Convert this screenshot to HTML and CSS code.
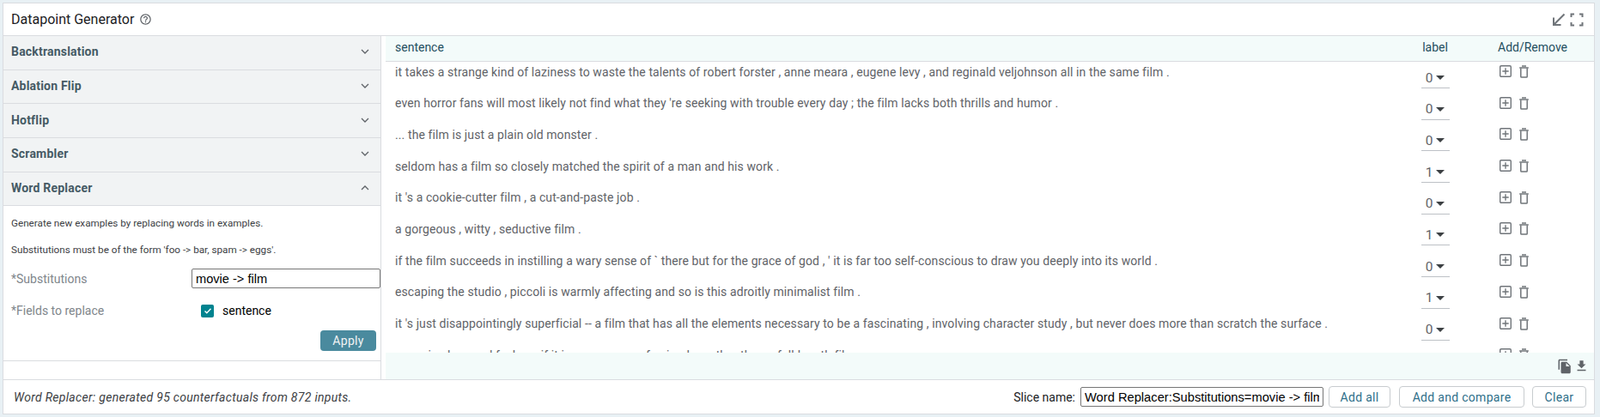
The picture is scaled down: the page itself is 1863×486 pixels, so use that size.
FILE: index.html
```html
<!DOCTYPE html>
<html lang="en">
<head>
    <meta charset="UTF-8">
    <title>Datapoint Generator</title>
    <link rel="stylesheet" href="styles.css">
</head>
<body>
    <div class="panel">
        <div class="panel-header">
            <div class="panel-title">
                <span>Datapoint Generator</span>
                <svg class="help-icon" width="15" height="15" viewBox="0 0 24 24"><path fill="#5f6368" d="M11 18h2v-2h-2v2zm1-16C6.48 2 2 6.48 2 12s4.480 10 10 10 10-4.480 10-10S17.520 2 12 2zm0 18c-4.410 0-8-3.590-8-8s3.590-8 8-8 8 3.590 8 8-3.590 8-8 8zm0-14c-2.210 0-4 1.790-4 4h2c0-1.100.9-2 2-2s2 .9 2 2c0 2-3 1.750-3 5h2c0-2.250 3-2.500 3-5 0-2.210-1.790-4-4-4z"/></svg>
            </div>
            <div class="panel-actions">
                <svg width="18" height="18" viewBox="0 0 18 18"><path fill="none" stroke="#70757a" stroke-width="2" d="M15.500 2.500 3 15M3 6.500V15h8.500"/></svg>
                <svg width="18" height="18" viewBox="0 0 18 18"><path fill="none" stroke="#70757a" stroke-width="2" d="M2.500 6V2.500H6M12 2.500h3.500V6M15.500 12v3.500H12M6 15.500H2.500V12"/></svg>
            </div>
        </div>

        <div class="panel-body">
            <div class="sidebar">
                <div class="acc-head"><span>Backtranslation</span><svg class="chev" width="10" height="6" viewBox="0 0 10 6"><path d="M1 1l4 4 4-4"/></svg></div>
                <div class="acc-head"><span>Ablation Flip</span><svg class="chev" width="10" height="6" viewBox="0 0 10 6"><path d="M1 1l4 4 4-4"/></svg></div>
                <div class="acc-head"><span>Hotflip</span><svg class="chev" width="10" height="6" viewBox="0 0 10 6"><path d="M1 1l4 4 4-4"/></svg></div>
                <div class="acc-head"><span>Scrambler</span><svg class="chev" width="10" height="6" viewBox="0 0 10 6"><path d="M1 1l4 4 4-4"/></svg></div>
                <div class="acc-head"><span>Word Replacer</span><svg class="chev" width="10" height="6" viewBox="0 0 10 6"><path d="M1 5l4-4 4 4"/></svg></div>
                <div class="acc-content">
                    <p class="desc">Generate new examples by replacing words in examples.</p>
                    <p class="desc">Substitutions must be of the form 'foo -&gt; bar, spam -&gt; eggs'.</p>
                    <div class="field field-subs">
                        <label class="field-label">*Substitutions</label>
                        <input class="subs-input" type="text" value="movie -&gt; film">
                    </div>
                    <div class="field field-check">
                        <label class="field-label">*Fields to replace</label>
                        <div class="check-wrap">
                            <span class="check-box"><svg width="12" height="12" viewBox="0 0 12 12"><path fill="none" stroke="#fff" stroke-width="1.400" d="M2.500 6.500l2.300 2.300 4.700-5"/></svg></span>
                            <span>sentence</span>
                        </div>
                    </div>
                    <div class="apply-row"><button class="apply-btn">Apply</button></div>
                </div>
            </div>

            <div class="table-wrap">
                <div class="row row-head">
                    <div class="cell-text">sentence</div>
                    <div class="cell-label">label</div>
                    <div class="cell-actions">Add/Remove</div>
                </div>
                <div class="rows" id="rows"></div>
                <div class="table-foot">
                    <svg width="18" height="18" viewBox="0 0 24 24"><path fill="#5f6368" d="M16 1H4c-1.100 0-2 .9-2 2v14h2V3h12V1zm-1 4 6 6v10c0 1.100-.9 2-2 2H7.990C6.890 23 6 22.100 6 21l.01-14c0-1.100.89-2 1.990-2h7zm-1 7h5.500L14 6.500V12z"/></svg>
                    <svg width="17" height="17" viewBox="0 0 24 24"><path fill="#5f6368" d="M19 9h-4V3H9v6H5l7 7 7-7zM5 18v2h14v-2H5z"/></svg>
                </div>
            </div>
        </div>

        <div class="panel-footer">
            <div class="status">Word Replacer: generated 95 counterfactuals from 872 inputs.</div>
            <div class="footer-controls">
                <label class="slice-label">Slice name:</label>
                <input class="slice-input" type="text" value="Word Replacer:Substitutions=movie -&gt; film">
                <button class="hairline-btn btn-all">Add all</button>
                <button class="hairline-btn btn-compare">Add and compare</button>
                <button class="hairline-btn btn-clear">Clear</button>
            </div>
        </div>
    </div>

    <script>
        const rows = [
            ["it takes a strange kind of laziness to waste the talents of robert forster , anne meara , eugene levy , and reginald veljohnson all in the same film .", 0],
            ["even horror fans will most likely not find what they 're seeking with trouble every day ; the film lacks both thrills and humor .", 0],
            ["... the film is just a plain old monster .", 0],
            ["seldom has a film so closely matched the spirit of a man and his work .", 1],
            ["it 's a cookie-cutter film , a cut-and-paste job .", 0],
            ["a gorgeous , witty , seductive film .", 1],
            ["if the film succeeds in instilling a wary sense of ` there but for the grace of god , ' it is far too self-conscious to draw you deeply into its world .", 0],
            ["escaping the studio , piccoli is warmly affecting and so is this adroitly minimalist film .", 1],
            ["it 's just disappointingly superficial -- a film that has all the elements necessary to be a fascinating , involving character study , but never does more than scratch the surface .", 0],
            ["a movie plays and feels as if it is a sequence of episodes rather than a full-length film .", 0]
        ];

        const plusIcon = '<svg width="14" height="14" viewBox="0 0 14 14"><rect x=".7" y=".7" width="12.600" height="12.600" rx="1.200" fill="none" stroke="#70757a" stroke-width="1.400"/><path stroke="#70757a" stroke-width="1.400" d="M7 3.300v7.400M3.300 7h7.400"/></svg>';
        const trashIcon = '<svg width="11" height="15" viewBox="0 0 11 15"><path fill="none" stroke="#70757a" stroke-width="1.500" d="M1.800 3.500v9.700c0 .5.300.8.800.8h5.800c.5 0 .8-.3.8-.8V3.500"/><path stroke="#70757a" stroke-width="1.500" d="M.2 3h10.600M3 1h5"/></svg>';

        const container = document.getElementById('rows');
        rows.forEach(function (r) {
            const row = document.createElement('div');
            row.className = 'row';
            row.innerHTML = '<div class="cell-text"></div>' +
                '<div class="cell-label"><span class="select"><span>' + r[1] + '</span><i class="caret"></i></span></div>' +
                '<div class="cell-actions">' + plusIcon + trashIcon + '</div>';
            row.querySelector('.cell-text').textContent = r[0];
            container.appendChild(row);
        });
    </script>
</body>
</html>
```

FILE: styles.css
```css
* {
    box-sizing: border-box;
}

html, body {
    height: 100%;
}

body {
    margin: 0;
    padding: 3px 6px 3px 3px;
    background-color: #e8f0f4;
    font-family: Roboto, "Noto Sans", sans-serif;
    overflow: hidden;
}

.panel {
    display: flex;
    flex-direction: column;
    height: 480px;
    background-color: #fff;
    border: 1px solid #dadce0;
}

.panel-header {
    display: flex;
    align-items: center;
    justify-content: space-between;
    height: 38px;
    flex: none;
    padding: 0 11px 0 9px;
    border-bottom: 1px solid #dadce0;
}

.panel-title {
    display: flex;
    align-items: center;
    gap: 6px;
    font-size: 16px;
    color: #202124;
}

.panel-actions {
    display: flex;
    gap: 3px;
}

.panel-body {
    display: flex;
    flex: 1;
    min-height: 0;
}

/* columna izquierda */
.sidebar {
    width: 440px;
    flex: none;
    border-right: 1px solid #dadce0;
}

.acc-head {
    display: flex;
    align-items: center;
    justify-content: space-between;
    height: 39.7px;
    padding: 0 13px 2px 9px;
    background-color: #f1f3f4;
    border-bottom: 1px solid #dadce0;
    font-size: 14px;
    font-weight: 700;
    letter-spacing: 0.2px;
    color: #455a64;
}

.chev path {
    fill: none;
    stroke: #5f6368;
    stroke-width: 1.300;
}

.acc-content {
    height: 181px;
    padding: 13px 0 0 9px;
    border-bottom: 1px solid #dadce0;
}

.desc {
    margin: 0 0 15.500px;
    font-size: 11.700px;
    line-height: 15.500px;
    color: #3c4043;
}

.field {
    display: flex;
    align-items: center;
}

.field-label {
    width: 210px;
    font-size: 14px;
    color: #80868b;
}

.field-subs {
    margin-top: -2px;
}

.subs-input {
    width: 220px;
    height: 23px;
    padding: 0 4px;
    border: 1px solid #767676;
    border-radius: 2px;
    font-family: "Liberation Sans", sans-serif;
    font-size: 14.600px;
    color: #000;
}

.field-check {
    margin-top: 18px;
}

.check-wrap {
    display: flex;
    align-items: center;
    gap: 10px;
    margin-left: 11px;
    font-size: 14px;
    color: #000;
}

.check-box {
    display: flex;
    align-items: center;
    justify-content: center;
    width: 15px;
    height: 15px;
    background-color: #00838f;
    border-radius: 2px;
}

.apply-row {
    display: flex;
    justify-content: flex-end;
    margin-top: 15px;
    padding-right: 5px;
}

.apply-btn {
    width: 65px;
    height: 24px;
    padding: 0;
    background-color: #4a8a9e;
    color: #f1f3f4;
    border: none;
    border-radius: 4px;
    font-family: inherit;
    font-size: 14px;
    letter-spacing: 0.3px;
}

/* tabla */
.table-wrap {
    display: flex;
    flex-direction: column;
    flex: 1;
    min-width: 0;
    margin-left: 5px;
}

.row {
    display: flex;
    height: 36.700px;
    flex: none;
}

.row-head {
    height: 30px;
    align-items: center;
    padding-bottom: 3px;
    background-color: #f3fbfa;
    border-bottom: 1px solid #dadce0;
    font-size: 14px;
    color: #1f4e5f;
}

.cell-text {
    flex: 1;
    min-width: 0;
    padding-left: 11px;
}

.cell-label {
    width: 74px;
    text-align: center;
}

.cell-actions {
    width: 148px;
    padding-left: 36px;
}

.rows {
    flex: 1;
    min-height: 0;
    overflow: hidden;
}

.rows .cell-text {
    padding-top: 3.500px;
    font-size: 14px;
    line-height: 16px;
    letter-spacing: 0.1px;
    color: #5f6368;
}

.rows .cell-label {
    padding-top: 7px;
}

.select {
    display: inline-flex;
    align-items: center;
    justify-content: center;
    gap: 4px;
    width: 33px;
    height: 24px;
    border-bottom: 1px solid #bdc1c6;
    font-size: 15.500px;
    color: #5f6368;
}

.caret {
    width: 0;
    height: 0;
    border-left: 5px solid transparent;
    border-right: 5px solid transparent;
    border-top: 5.500px solid #3c4043;
}

.rows .cell-actions {
    display: flex;
    align-items: flex-start;
    gap: 9px;
    padding-top: 4px;
    padding-left: 38px;
}

.table-foot {
    display: flex;
    align-items: center;
    justify-content: flex-end;
    gap: 2px;
    height: 31px;
    flex: none;
    padding-right: 6px;
    background-color: #f3fbfa;
}

/* pie */
.panel-footer {
    display: flex;
    align-items: center;
    justify-content: space-between;
    height: 40px;
    flex: none;
    padding: 0 9px 0 12px;
    border-top: 1px solid #dadce0;
}

.status {
    font-size: 14px;
    font-style: italic;
    letter-spacing: 0.3px;
    color: #3c4043;
}

.footer-controls {
    display: flex;
    align-items: center;
}

.slice-label {
    margin-right: 6px;
    font-size: 14px;
    color: #202124;
}

.slice-input {
    width: 283px;
    height: 23px;
    margin-right: 6px;
    padding: 0 4px;
    border: 1px solid #767676;
    border-radius: 2px;
    font-family: "Liberation Sans", sans-serif;
    font-size: 14.700px;
    color: #000;
}

.hairline-btn {
    height: 25px;
    padding: 0;
    background-color: #fff;
    border: 1px solid #c8cccf;
    border-radius: 4px;
    font-family: inherit;
    font-size: 14px;
    letter-spacing: 0.3px;
    color: #2f6f8a;
}

.btn-all {
    width: 72px;
    margin-right: 10px;
}

.btn-compare {
    width: 146px;
    margin-right: 9px;
}

.btn-clear {
    width: 63px;
}
```
